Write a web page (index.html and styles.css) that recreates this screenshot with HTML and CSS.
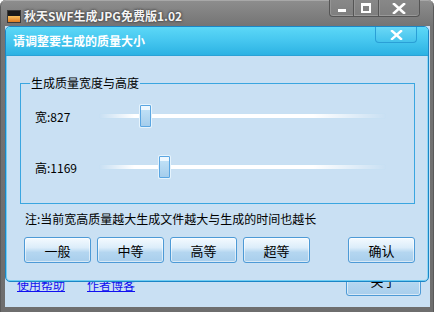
FILE: index.html
```html
<!DOCTYPE html>
<html>

<head>
    <title>秋天SWF生成JPG免费版1.02</title>
    <link rel="stylesheet" href="styles.css">
</head>

<body>
    <div class="window">
        <div class="titlebar">
            <span class="app-icon"><span class="app-icon-fill"></span></span>
            <span class="title">秋天SWF生成JPG免费版1.02</span>
            <div class="controls">
                <span class="ctl ctl-min"><span class="min-bar"></span></span>
                <span class="ctl ctl-max"><span class="max-box"></span></span>
                <span class="ctl ctl-close">
                    <svg width="14" height="11" viewBox="0 0 14 11">
                        <path d="M2 1 L12 10 M12 1 L2 10" stroke="#fff" stroke-width="2.6" stroke-linecap="square" />
                    </svg>
                </span>
            </div>
        </div>

        <div class="client">
            <div class="footer">
                <a class="link" href="#">使用帮助</a>
                <a class="link" href="#">作者博客</a>
                <button class="btn btn-about" type="button">关于</button>
            </div>

            <div class="dialog">
                <div class="dialog-title">
                    <span class="dialog-caption">请调整要生成的质量大小</span>
                    <span class="dialog-close">
                        <svg width="13" height="10" viewBox="0 0 13 10">
                            <path d="M2 1 L11 9 M11 1 L2 9" stroke="#fff" stroke-width="2.4" stroke-linecap="square" />
                        </svg>
                    </span>
                </div>

                <div class="dialog-body">
                    <fieldset class="group">
                        <legend class="group-label">生成质量宽度与高度</legend>

                        <div class="slider-row">
                            <span class="slider-label">宽:827</span>
                            <div class="slider">
                                <span class="track"></span>
                                <span class="thumb" style="left: 40px"></span>
                            </div>
                        </div>

                        <div class="slider-row">
                            <span class="slider-label">高:1169</span>
                            <div class="slider">
                                <span class="track"></span>
                                <span class="thumb" style="left: 59px"></span>
                            </div>
                        </div>
                    </fieldset>

                    <p class="note">注:当前宽高质量越大生成文件越大与生成的时间也越长</p>

                    <div class="buttons">
                        <button class="btn" type="button">一般</button>
                        <button class="btn" type="button">中等</button>
                        <button class="btn" type="button">高等</button>
                        <button class="btn" type="button">超等</button>
                        <button class="btn btn-ok" type="button">确认</button>
                    </div>
                </div>
            </div>
        </div>
    </div>
</body>

</html>
```

FILE: styles.css
```css
body {
    margin: 0;
    width: 434px;
    height: 312px;
    overflow: hidden;
    font-family: "Noto Sans CJK SC", "Liberation Sans", sans-serif;
    font-size: 12px;
    background-color: #fff;
}

.window {
    width: 434px;
    height: 312px;
    box-sizing: border-box;
    padding: 0 4px 5px 5px;
    background: linear-gradient(#8e8e8e, #747474 26px, #6e6e6e);
    border-radius: 6px 6px 0 0;
    box-shadow: inset 0 1px 0 #a8a8a8, inset 1px 0 0 #5a5a5a, inset -1px 0 0 #5a5a5a;
}

/* outer window title */
.titlebar {
    height: 26px;
    display: flex;
    align-items: flex-start;
}

.app-icon {
    width: 12px;
    height: 11px;
    margin: 10px 0 0 2px;
    border: 1px solid #3a3a3a;
    background: #1a1a1a;
    display: flex;
    align-items: flex-end;
}

.app-icon-fill {
    width: 12px;
    height: 6px;
    background: linear-gradient(#f6c060, #e07a20);
}

.title {
    margin: 8px 0 0 3px;
    color: #f4f4f4;
    font-weight: bold;
    font-size: 12px;
    line-height: 16px;
    text-shadow: 0 0 3px #3c3c3c, 0 0 2px #3c3c3c;
}

.controls {
    display: flex;
    margin-left: auto;
    margin-right: 10px;
}

.ctl {
    height: 17px;
    box-sizing: border-box;
    border: 1px solid #555;
    border-top: none;
    background: linear-gradient(#888, #7e7e7e);
    box-shadow: inset 0 -1px 0 #999, inset 1px 0 0 #959595;
    display: flex;
    align-items: center;
    justify-content: center;
}

.ctl-min {
    width: 25px;
    border-radius: 0 0 0 4px;
    align-items: flex-end;
}

.min-bar {
    width: 8px;
    height: 3px;
    margin-bottom: 4px;
    background: #fff;
}

.ctl-max {
    width: 25px;
    border-left: none;
}

.max-box {
    width: 6px;
    height: 5px;
    border: 2px solid #fff;
    border-top-width: 3px;
}

.ctl-close {
    width: 41px;
    border-left: none;
    border-radius: 0 0 4px 0;
}

/* outer client area */
.client {
    position: relative;
    height: 281px;
    background-color: #c9e0f3;
    display: flex;
    flex-direction: column;
    justify-content: flex-end;
}

.footer {
    display: flex;
    align-items: flex-end;
    padding: 0 9px 11px 12px;
}

.link {
    color: #1010f0;
    text-decoration: underline;
    line-height: 14px;
    margin-right: 22px;
    margin-bottom: 4px;
}

.btn {
    width: 67px;
    height: 26px;
    padding: 0;
    font-family: "Noto Sans CJK SC", sans-serif;
    font-size: 13px;
    color: #000;
    border: 1px solid #4d9ad6;
    border-radius: 3px;
    background: linear-gradient(#f4faff, #dcedfa 40%, #b4d6f0 60%, #a8ceec);
    box-shadow: inset 0 0 0 1px rgba(255, 255, 255, 0.55);
}

.btn-about {
    width: 75px;
    height: 31px;
    margin-left: auto;
}

/* modal dialog, floating over the main window */
.dialog {
    position: absolute;
    left: 0;
    top: 0;
    width: 424px;
    height: 256px;
    box-sizing: border-box;
    border: 1px solid #1b86c6;
    border-radius: 5px;
    background-color: #c9e0f3;
    box-shadow: inset 1px 0 0 #6fcdf2, inset -1px 0 0 #8fd6f4, inset 0 -1px 0 #6fcdf2;
    display: flex;
    flex-direction: column;
}

.dialog-title {
    height: 28px;
    display: flex;
    align-items: flex-start;
    background: linear-gradient(#5cd8f7, #45c6ef 50%, #2cb2e3);
    border-radius: 4px 4px 0 0;
    border-bottom: 1px solid #2aa2d6;
}

.dialog-caption {
    margin: 6px 0 0 7px;
    color: #fff;
    font-size: 12px;
    line-height: 16px;
    font-weight: bold;
}

.dialog-close {
    width: 42px;
    height: 16px;
    margin-left: auto;
    margin-right: 11px;
    box-sizing: border-box;
    border: 1px solid #2a9fd6;
    border-top: none;
    border-radius: 0 0 4px 4px;
    background: linear-gradient(#6ad8f6, #44c2ec);
    display: flex;
    align-items: center;
    justify-content: center;
}

.dialog-body {
    padding: 20px 13px 0 14px;
}

.group {
    margin: 0;
    padding: 0;
    height: 128px;
    box-sizing: border-box;
    border: 1px solid #3aa6e0;
    min-width: 0;
}

.group-label {
    margin-left: 9px;
    padding: 0 1px;
    font-size: 12px;
    line-height: 14px;
    color: #000;
}

.slider-row {
    display: flex;
    align-items: center;
    height: 22px;
    margin-top: 15px;
}

.slider-row + .slider-row {
    margin-top: 29px;
}

.slider-label {
    width: 65px;
    padding-left: 14px;
    color: #000;
    font-size: 12px;
}

.slider {
    position: relative;
    width: 285px;
    height: 22px;
}

.track {
    position: absolute;
    left: 0;
    right: 0;
    top: 9px;
    height: 4px;
    background: linear-gradient(90deg, rgba(255, 255, 255, 0), #fff 12%, #fff 75%, rgba(255, 255, 255, 0));
    box-shadow: 0 0 1px #b6dcf4;
}

.thumb {
    position: absolute;
    top: 0;
    width: 11px;
    height: 22px;
    box-sizing: border-box;
    border: 1px solid #5aa6e2;
    border-radius: 1px;
    background: linear-gradient(#eef8ff 0, #eef8ff 4px, #bfe0f6 4px, #a4cdec);
    box-shadow: 0 0 0 1px #e6f4fd;
}

.note {
    margin: 8px 0 0 5px;
    line-height: 14px;
    color: #000;
}

.buttons {
    display: flex;
    gap: 6px;
    margin: 11px 0 0 4px;
}

.btn-ok {
    margin-left: auto;
}
```
